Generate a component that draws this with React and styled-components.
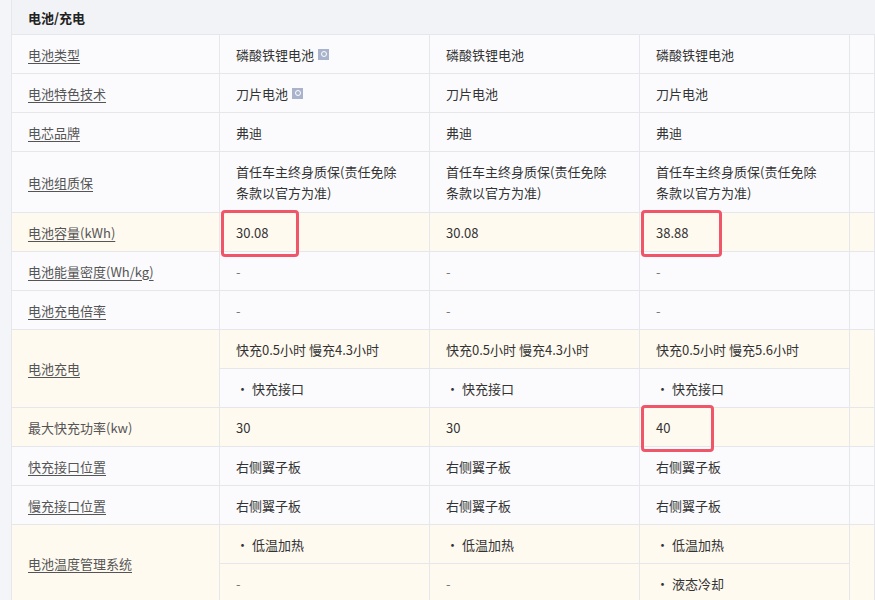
import React from "react";
import styled, { createGlobalStyle } from "styled-components";

const G = createGlobalStyle`
  body{margin:0;font-family:"Noto Sans CJK SC","Liberation Sans",sans-serif;background:#f4f5f8;}
  *{box-sizing:border-box;}
`;
const Page = styled.div`display:flex;`;
const Strip = styled.div`width:12px;flex:none;background:#f4f5f8;border-right:1px solid #e6e7eb;`;
const Table = styled.div`flex:1;background:#fbfbfd;`;
const Head = styled.div`height:35px;display:flex;align-items:center;padding-left:16px;background:#f2f3f7;
  border-bottom:1px solid #e6e7eb;font-size:13px;font-weight:bold;color:#222;`;
const Row = styled.div`display:grid;grid-template-columns:208px 210px 210px 210px 1fr;
  background:${p=>p.$hl?"#fffaf0":"#fbfbfd"};border-bottom:1px solid #e6e7eb;`;
const Label = styled.div`display:flex;align-items:center;padding-left:16px;font-size:13px;color:#555;
  border-right:1px solid #e6e7eb;text-decoration:${p=>p.$link?"underline":"none"};text-underline-offset:3px;`;
const Col = styled.div`display:flex;flex-direction:column;border-right:1px solid #e6e7eb;`;
const Cell = styled.div`position:relative;min-height:${p=>p.$h||38}px;padding:${p=>p.$multi?"9px 22px 9px 16px":"0 16px"};display:flex;align-items:center;
  font-size:13px;color:#333;line-height:21px;
  background:${p=>p.$bg||"transparent"};
  & + &{border-top:1px solid #e6e7eb;min-height:39px;}
  ${p=>p.$mark?`&::after{content:"";position:absolute;left:1px;top:-3px;width:${p.$mark}px;height:41px;border:3px solid #f0566a;border-radius:4px;}`:""}`;
const Dash = styled.span`color:#777;`;
const Search = styled.span`display:inline-block;width:11px;height:11px;background:#a9b4cc;margin-left:4px;position:relative;
  &::before{content:"";position:absolute;left:3px;top:2px;width:4px;height:4px;border:1px solid #fff;border-radius:50%;}`;

const W="#fbfbfd";
const rows=[
 {l:"电池类型",link:1,v:[[{t:<>磷酸铁锂电池<Search/></>}],[{t:"磷酸铁锂电池"}],[{t:"磷酸铁锂电池"}]]},
 {l:"电池特色技术",link:1,v:[[{t:<>刀片电池<Search/></>}],[{t:"刀片电池"}],[{t:"刀片电池"}]]},
 {l:"电芯品牌",link:1,v:[[{t:"弗迪"}],[{t:"弗迪"}],[{t:"弗迪"}]]},
 {l:"电池组质保",link:1,multi:1,v:[[{t:"首任车主终身质保(责任免除条款以官方为准)"}],[{t:"首任车主终身质保(责任免除条款以官方为准)"}],[{t:"首任车主终身质保(责任免除条款以官方为准)"}]]},
 {l:"电池容量(kWh)",link:1,hl:1,v:[[{t:"30.08",m:72}],[{t:"30.08"}],[{t:"38.88",m:75}]]},
 {l:"电池能量密度(Wh/kg)",link:1,v:[[{d:1}],[{d:1}],[{d:1}]]},
 {l:"电池充电倍率",link:1,v:[[{d:1}],[{d:1}],[{d:1}]]},
 {l:"电池充电",link:1,hl:1,v:[[{t:"快充0.5小时 慢充4.3小时"},{t:"• 快充接口",bg:W}],[{t:"快充0.5小时 慢充4.3小时"},{t:"• 快充接口",bg:W}],[{t:"快充0.5小时 慢充5.6小时"},{t:"• 快充接口",bg:W}]]},
 {l:"最大快充功率(kw)",hl:1,v:[[{t:"30"}],[{t:"30"}],[{t:"40",m:67}]]},
 {l:"快充接口位置",link:1,v:[[{t:"右侧翼子板"}],[{t:"右侧翼子板"}],[{t:"右侧翼子板"}]]},
 {l:"慢充接口位置",link:1,v:[[{t:"右侧翼子板"}],[{t:"右侧翼子板"}],[{t:"右侧翼子板"}]]},
 {l:"电池温度管理系统",link:1,hl:1,v:[[{t:"• 低温加热"},{d:1}],[{t:"• 低温加热"},{d:1}],[{t:"• 低温加热"},{t:"• 液态冷却"}]]},
];

export default function App(){
  return <><G/><Page><Strip/><Table>
    <Head>电池/充电</Head>
    {rows.map((r,i)=><Row key={i} $hl={r.hl}>
      <Label $link={r.link}>{r.l}</Label>
      {r.v.map((c,j)=><Col key={j}>{c.map((s,k)=><Cell key={k} $multi={r.multi} $h={r.multi?60:38} $bg={s.bg} $mark={s.m}>{s.d?<Dash>-</Dash>:s.t}</Cell>)}</Col>)}
      <Col/>
    </Row>)}
  </Table></Page></>;
}
